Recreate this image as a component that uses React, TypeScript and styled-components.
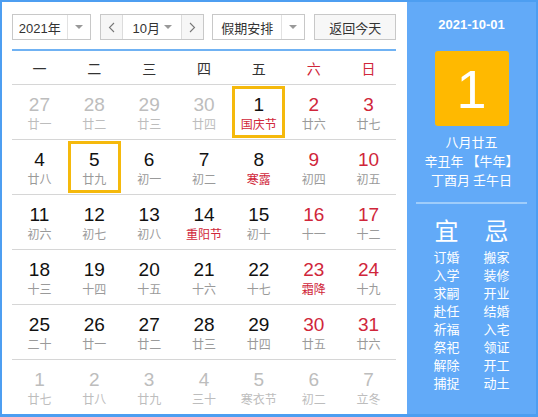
import styled, { createGlobalStyle } from 'styled-components';

const GlobalStyle = createGlobalStyle`
  html, body {
    margin: 0;
    padding: 0;
    background: #fff;
  }
  body {
    font-family: "Liberation Sans", "Noto Sans CJK SC", Arial, sans-serif;
  }
`;

const Frame = styled.div`
  width: 538px;
  height: 417px;
  box-sizing: border-box;
  border: 2px solid #4d9ef1;
  border-bottom-width: 3px;
  display: flex;
  background: #fff;
`;

const Main = styled.div`
  width: 405px;
  padding: 12px 11px 0 10px;
  box-sizing: border-box;
  display: flex;
  flex-direction: column;
`;

const Toolbar = styled.div`
  display: flex;
  align-items: center;
  gap: 8px;
  height: 26px;
  padding-bottom: 9px;
  border-bottom: 2px solid #70b2f3;
`;

const Select = styled.div<{ width: number }>`
  width: ${(p) => p.width}px;
  height: 26px;
  box-sizing: border-box;
  border: 1px solid #c8c8c8;
  display: flex;
  align-items: stretch;
  background: #fff;
  font-family: "Liberation Sans", "Noto Sans CJK SC", sans-serif;
  font-size: 13px;
  color: #333;
`;

const SelectLabel = styled.span`
  flex: 1;
  display: flex;
  align-items: center;
  justify-content: center;
`;

const Caret = styled.span`
  width: 22px;
  border-left: 1px solid #e2e2e2;
  display: flex;
  align-items: center;
  justify-content: center;
  &::after {
    content: '';
    border-left: 4px solid transparent;
    border-right: 4px solid transparent;
    border-top: 4px solid #999;
  }
`;

const MonthGroup = styled.div`
  width: 105px;
  height: 26px;
  box-sizing: border-box;
  border: 1px solid #c8c8c8;
  display: flex;
  align-items: stretch;
  font-size: 13px;
  color: #333;
  margin-left: 1px;
`;

const StepButton = styled.span`
  width: 21px;
  flex-shrink: 0;
  background: #f6f6f6;
  display: flex;
  align-items: center;
  justify-content: center;
`;

const MonthLabel = styled.span`
  flex: 1;
  display: flex;
  align-items: center;
  justify-content: space-between;
  white-space: nowrap;
  border-left: 1px solid #dcdcdc;
  border-right: 1px solid #dcdcdc;
  padding: 0 9px 0 10px;
  &::after {
    content: '';
    border-left: 4px solid transparent;
    border-right: 4px solid transparent;
    border-top: 4px solid #999;
  }
`;

const TodayButton = styled.span`
  width: 82px;
  height: 26px;
  box-sizing: border-box;
  border: 1px solid #c8c8c8;
  background: #f7f7f7;
  display: flex;
  align-items: center;
  justify-content: center;
  font-family: "Noto Sans CJK SC", sans-serif;
  font-size: 13px;
  color: #333;
  margin-left: 1px;
`;

const WeekHeader = styled.div`
  display: grid;
  grid-template-columns: repeat(7, 1fr);
  height: 33px;
  align-items: center;
  font-family: "Noto Sans CJK SC", sans-serif;
  font-size: 14px;
`;

const WeekName = styled.span<{ weekend?: boolean }>`
  text-align: center;
  color: ${(p) => (p.weekend ? '#d0263a' : '#333')};
`;

const DayGrid = styled.div`
  display: grid;
  grid-template-columns: repeat(7, 1fr);
  grid-auto-rows: 55px;
`;

const Cell = styled.div`
  border-top: 1px solid #d6d6d6;
  padding: 1px;
  box-sizing: border-box;
`;

const DayBox = styled.div<{ marked: boolean }>`
  height: 100%;
  box-sizing: border-box;
  border: 3px solid ${(p) => (p.marked ? '#f5b90c' : 'transparent')};
  display: flex;
  flex-direction: column;
  align-items: center;
  justify-content: center;
  padding-top: 1px;
`;

const DayNum = styled.span<{ tone: string }>`
  font-family: "Liberation Sans", Arial, sans-serif;
  font-size: 19px;
  line-height: 21px;
  color: ${(p) => p.tone};
`;

const Lunar = styled.span<{ tone: string }>`
  font-family: "Noto Sans CJK SC", sans-serif;
  font-size: 12px;
  line-height: 17px;
  color: ${(p) => p.tone};
`;

const Side = styled.div`
  flex: 1;
  background: #62aaf8;
  color: #fff;
  display: flex;
  flex-direction: column;
  align-items: center;
  font-family: "Noto Sans CJK SC", sans-serif;
`;

const SideDate = styled.div`
  margin-top: 15px;
  font-family: "Liberation Sans", Arial, sans-serif;
  font-weight: bold;
  font-size: 13px;
  line-height: 16px;
`;

const BigDay = styled.div`
  margin-top: 18px;
  width: 74px;
  height: 75px;
  border-radius: 3px;
  background: #ffb900;
  display: flex;
  align-items: center;
  justify-content: center;
  font-family: "Liberation Sans", Arial, sans-serif;
  font-size: 54px;
  color: #fff;
`;

const LunarInfo = styled.div`
  margin-top: 6px;
  text-align: center;
  font-size: 13px;
  line-height: 19px;
`;

const Divider = styled.div`
  margin-top: 13px;
  width: 111px;
  height: 2px;
  background: #9fcdfb;
`;

const Advice = styled.div`
  margin-top: 10px;
  display: grid;
  grid-template-columns: 50px 50px;
  justify-items: center;
`;

const AdviceColumn = styled.div`
  display: flex;
  flex-direction: column;
  align-items: center;
`;

const AdviceTitle = styled.div`
  font-size: 24px;
  line-height: 32px;
  margin-bottom: 2px;
`;

const AdviceItem = styled.div`
  font-size: 13px;
  line-height: 18px;
`;

type Day = { n: number; l: string; out?: boolean; fest?: boolean };

const days: Day[] = [
  { n: 27, l: '廿一', out: true }, { n: 28, l: '廿二', out: true }, { n: 29, l: '廿三', out: true },
  { n: 30, l: '廿四', out: true }, { n: 1, l: '国庆节', fest: true }, { n: 2, l: '廿六' }, { n: 3, l: '廿七' },
  { n: 4, l: '廿八' }, { n: 5, l: '廿九' }, { n: 6, l: '初一' }, { n: 7, l: '初二' },
  { n: 8, l: '寒露', fest: true }, { n: 9, l: '初四' }, { n: 10, l: '初五' },
  { n: 11, l: '初六' }, { n: 12, l: '初七' }, { n: 13, l: '初八' }, { n: 14, l: '重阳节', fest: true },
  { n: 15, l: '初十' }, { n: 16, l: '十一' }, { n: 17, l: '十二' },
  { n: 18, l: '十三' }, { n: 19, l: '十四' }, { n: 20, l: '十五' }, { n: 21, l: '十六' },
  { n: 22, l: '十七' }, { n: 23, l: '霜降', fest: true }, { n: 24, l: '十九' },
  { n: 25, l: '二十' }, { n: 26, l: '廿一' }, { n: 27, l: '廿二' }, { n: 28, l: '廿三' },
  { n: 29, l: '廿四' }, { n: 30, l: '廿五' }, { n: 31, l: '廿六' },
  { n: 1, l: '廿七', out: true }, { n: 2, l: '廿八', out: true }, { n: 3, l: '廿九', out: true },
  { n: 4, l: '三十', out: true }, { n: 5, l: '寒衣节', out: true }, { n: 6, l: '初二', out: true },
  { n: 7, l: '立冬', out: true },
];

const weekNames = ['一', '二', '三', '四', '五', '六', '日'];
const good = ['订婚', '入学', '求嗣', '赴任', '祈福', '祭祀', '解除', '捕捉'];
const bad = ['搬家', '装修', '开业', '结婚', '入宅', '领证', '开工', '动土'];

function numTone(d: Day, col: number) {
  if (d.out) return '#bdbdbd';
  if (col >= 5) return '#d0263a';
  return '#111';
}

function lunarTone(d: Day) {
  if (d.out) return '#bdbdbd';
  if (d.fest) return '#d0263a';
  return '#9a9a9a';
}

function Chevron({ dir }: { dir: 'left' | 'right' }) {
  return (
    <svg width="7" height="11" viewBox="0 0 7 11">
      <polyline
        points={dir === 'left' ? '6,1 1.5,5.5 6,10' : '1,1 5.5,5.5 1,10'}
        fill="none"
        stroke="#777"
        strokeWidth="1.1"
      />
    </svg>
  );
}

export default function App() {
  return (
    <>
      <GlobalStyle />
      <Frame>
        <Main>
          <Toolbar>
            <Select width={79}>
              <SelectLabel>2021年</SelectLabel>
              <Caret />
            </Select>
            <MonthGroup>
              <StepButton>
                <Chevron dir="left" />
              </StepButton>
              <MonthLabel>10月</MonthLabel>
              <StepButton>
                <Chevron dir="right" />
              </StepButton>
            </MonthGroup>
            <Select width={94}>
              <SelectLabel>假期安排</SelectLabel>
              <Caret />
            </Select>
            <TodayButton>返回今天</TodayButton>
          </Toolbar>
          <WeekHeader>
            {weekNames.map((w, i) => (
              <WeekName key={w} weekend={i >= 5}>
                {w}
              </WeekName>
            ))}
          </WeekHeader>
          <DayGrid>
            {days.map((d, i) => (
              <Cell key={i}>
                <DayBox marked={i === 4 || i === 8}>
                  <DayNum tone={numTone(d, i % 7)}>{d.n}</DayNum>
                  <Lunar tone={lunarTone(d)}>{d.l}</Lunar>
                </DayBox>
              </Cell>
            ))}
          </DayGrid>
        </Main>
        <Side>
          <SideDate>2021-10-01</SideDate>
          <BigDay>1</BigDay>
          <LunarInfo>
            <div>八月廿五</div>
            <div>辛丑年 【牛年】</div>
            <div>丁酉月 壬午日</div>
          </LunarInfo>
          <Divider />
          <Advice>
            <AdviceColumn>
              <AdviceTitle>宜</AdviceTitle>
              {good.map((g) => (
                <AdviceItem key={g}>{g}</AdviceItem>
              ))}
            </AdviceColumn>
            <AdviceColumn>
              <AdviceTitle>忌</AdviceTitle>
              {bad.map((b) => (
                <AdviceItem key={b}>{b}</AdviceItem>
              ))}
            </AdviceColumn>
          </Advice>
        </Side>
      </Frame>
    </>
  );
}
